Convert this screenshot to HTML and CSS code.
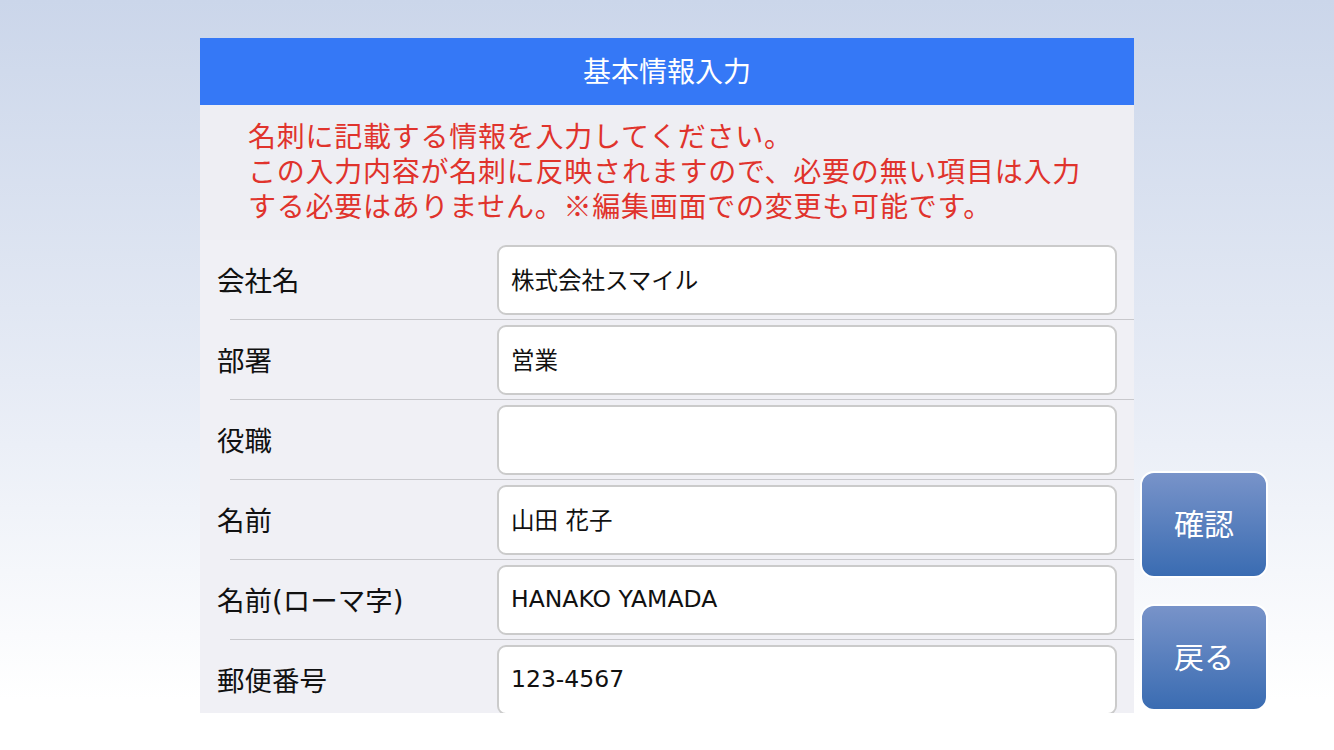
FILE: index.html
```html
<!DOCTYPE html>
<html lang="ja">
<head>
<meta charset="utf-8">
<title>基本情報入力</title>
<link rel="stylesheet" href="styles.css">
</head>
<body>
<div class="screen">
  <div class="panel">
    <div class="header">基本情報入力</div>
    <div class="notice">
      <p>名刺に記載する情報を入力してください。</p>
      <p>この入力内容が名刺に反映されますので、必要の無い項目は入力</p>
      <p>する必要はありません。※編集画面での変更も可能です。</p>
    </div>
    <div class="form">
      <div class="row"><div class="label">会社名</div><div class="field">株式会社スマイル</div></div>
      <div class="row"><div class="label">部署</div><div class="field">営業</div></div>
      <div class="row"><div class="label">役職</div><div class="field"></div></div>
      <div class="row"><div class="label">名前</div><div class="field">山田 花子</div></div>
      <div class="row"><div class="label">名前(ローマ字)</div><div class="field">HANAKO YAMADA</div></div>
      <div class="row"><div class="label">郵便番号</div><div class="field">123-4567</div></div>
    </div>
  </div>
  <div class="actions">
    <div class="btn">確認</div>
    <div class="btn">戻る</div>
  </div>
</div>
</body>
</html>
```
FILE: styles.css
```css
html, body {
  margin: 0;
  padding: 0;
}
body {
  width: 1334px;
  height: 750px;
  overflow: hidden;
  background: linear-gradient(to bottom, #cbd6ea 0px, #e6ebf5 380px, #ffffff 700px);
  font-family: "Noto Sans CJK JP", "Noto Sans", sans-serif;
}
.screen {
  display: flex;
  align-items: flex-start;
  gap: 6px;
  padding: 38px 0 0 200px;
}
.panel {
  width: 934px;
  height: 675px;
  overflow: hidden;
  background: #f0f0f5;
  display: flex;
  flex-direction: column;
}
.header {
  height: 67px;
  flex: none;
  box-sizing: border-box;
  padding-bottom: 3px;
  background: #3578f6;
  color: #ffffff;
  font-size: 28px;
  display: flex;
  align-items: center;
  justify-content: center;
  line-height: 1;
}
.notice {
  flex: none;
  height: 135px;
  box-sizing: border-box;
  padding: 13px 0 0 48px;
  background: #eeeef3;
  color: #e0332c;
  font-size: 28px;
  letter-spacing: 0.76px;
  line-height: 35px;
}
.notice p {
  margin: 0;
  white-space: nowrap;
}
.form {
  flex: none;
}
.row {
  height: 80px;
  display: flex;
  align-items: flex-start;
  position: relative;
}
.row::after {
  content: "";
  position: absolute;
  left: 30px;
  right: 0;
  bottom: 0;
  height: 1px;
  background: #c8c8cc;
}
.label {
  width: 297px;
  box-sizing: border-box;
  padding: 0 0 3px 17px;
  height: 80px;
  display: flex;
  align-items: center;
  font-family: "DejaVu Sans", "Noto Sans CJK JP", sans-serif;
  font-size: 27.5px;
  color: #111111;
}
.field {
  margin-top: 5px;
  width: 620px;
  height: 70px;
  box-sizing: border-box;
  border: 2px solid #cbcbcb;
  border-radius: 9px;
  background: #ffffff;
  padding: 0 0 3px 12px;
  display: flex;
  align-items: center;
  font-family: "DejaVu Sans", "Noto Sans CJK JP", sans-serif;
  font-size: 23.5px;
  color: #111111;
}
.actions {
  display: flex;
  flex-direction: column;
  gap: 26px;
  padding-top: 433px;
}
.btn {
  width: 128px;
  height: 107px;
  box-sizing: border-box;
  border: 2px solid #ffffff;
  border-radius: 14px;
  background: linear-gradient(to bottom, #7893c9, #3a6cb2);
  color: #ffffff;
  font-size: 30px;
  padding-bottom: 6px;
  display: flex;
  align-items: center;
  justify-content: center;
}
```
